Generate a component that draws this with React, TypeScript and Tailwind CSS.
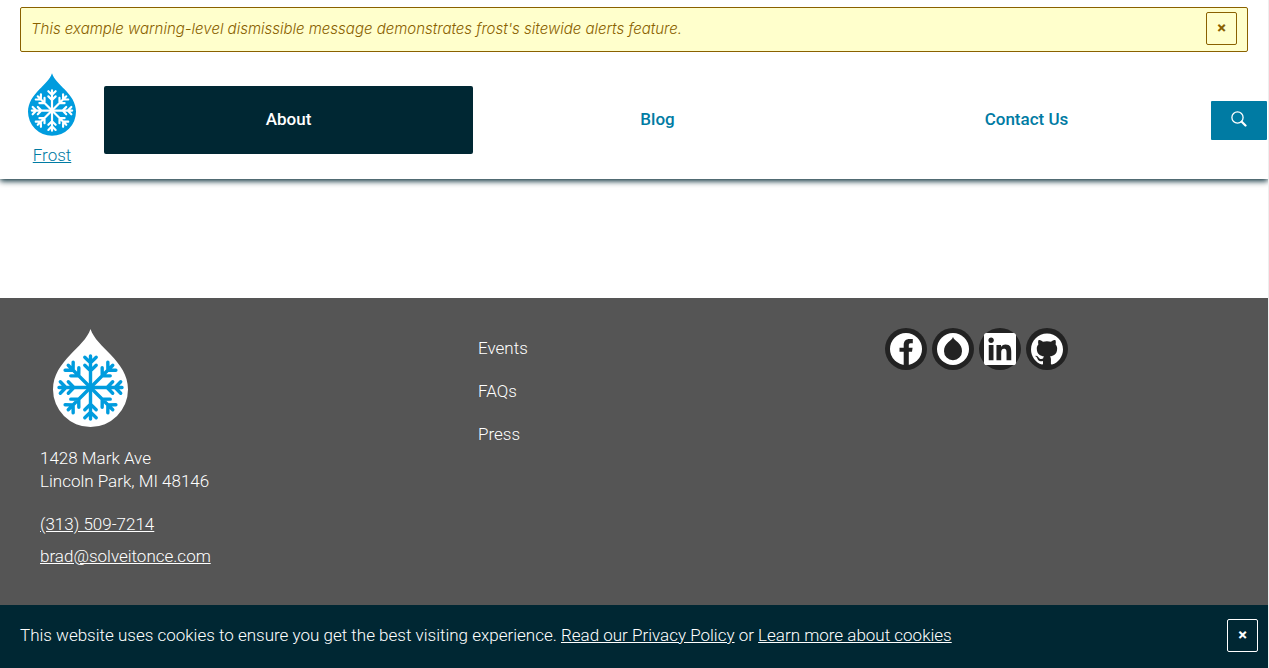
import type { ReactNode } from "react";
import { SiGithub } from "react-icons/si";

const navItems = [
  { label: "About", active: true },
  { label: "Blog", active: false },
  { label: "Contact Us", active: false },
];

const footerLinks = ["Events", "FAQs", "Press"];

const armAngles = [0, 45, 90, 135, 180, 225, 270, 315];

function DropLogo({ className, drop, flake }: { className: string; drop: string; flake: string }) {
  return (
    <svg viewBox="0 0 75 98" className={className} aria-hidden="true">
      <path
        fill={drop}
        d="M37.5 0C40.5 9.5 50 17.500 57.500 25.500C67 35.500 75 46 75 60.500A37.500 37.500 0 0 1 0 60.500C0 46 8 35.500 17.500 25.500C25 17.500 34.500 9.500 37.500 0Z"
      />
      <g fill="none" stroke={flake} strokeWidth="3.4" strokeLinecap="round" strokeLinejoin="round">
        {armAngles.map((angle) => (
          <path
            key={angle}
            transform={`translate(37.5 58.5) rotate(${angle})`}
            d="M0 0V-31.500M-5.700 -30.200L0 -24.600L5.700 -30.200M-5.700 -22.200L0 -16.600L5.700 -22.200"
          />
        ))}
      </g>
    </svg>
  );
}

function FacebookMark() {
  return (
    <svg viewBox="0 0 32 32" className="size-8" aria-hidden="true">
      <circle cx="16" cy="16" r="16" fill="#fff" />
      <path
        fill="#222"
        d="M13.700 32V18.800H9.500V14.700H13.700V12C13.700 8 16 6 19.500 6H22.800V10.200H20.600C19.100 10.200 18.800 10.900 18.800 12.200V14.700H22.600L22 18.800H18.800V32Z"
      />
    </svg>
  );
}

function DropBadge() {
  return (
    <svg viewBox="0 0 32 32" className="size-8" aria-hidden="true">
      <circle cx="16" cy="16" r="16" fill="#fff" />
      <path
        fill="#222"
        d="M16 4C16.600 6.200 18.800 7.600 20.800 9.300C23.500 11.700 25 14.700 25 18.200A9 9 0 0 1 7 18.200C7 14.700 8.500 11.700 11.200 9.300C13.200 7.600 15.400 6.200 16 4Z"
      />
    </svg>
  );
}

function LinkedInMark() {
  return (
    <svg viewBox="0 0 24 24" className="size-8" fill="currentColor" aria-hidden="true">
      <path d="M20.447 20.452h-3.554v-5.569c0-1.328-.027-3.037-1.852-3.037-1.853 0-2.136 1.445-2.136 2.939v5.667H9.351V9h3.414v1.561h.046c.477-.9 1.637-1.850 3.370-1.850 3.601 0 4.267 2.370 4.267 5.455v6.286zM5.337 7.433c-1.144 0-2.063-.926-2.063-2.065 0-1.138.92-2.063 2.063-2.063 1.140 0 2.064.925 2.064 2.063 0 1.139-.925 2.065-2.064 2.065zm1.782 13.019H3.555V9h3.564v11.452zM22.225 0H1.771C.792 0 0 .774 0 1.729v20.542C0 23.227.792 24 1.771 24h20.451C23.200 24 24 23.227 24 22.271V1.729C24 .774 23.200 0 22.222 0h.003z" />
    </svg>
  );
}

function CloseButton({ label, className }: { label: string; className: string }) {
  return (
    <button
      type="button"
      aria-label={label}
      className={`flex h-[33px] w-[31px] shrink-0 cursor-pointer items-center justify-center rounded-xs border pb-0.5 font-['Inter','Liberation_Sans',sans-serif] text-[15px] leading-4 font-bold ${className}`}
    >
      ×
    </button>
  );
}

function SocialLink({ label, children }: { label: string; children: ReactNode }) {
  return (
    <a
      href="#"
      aria-label={label}
      className="flex size-[42px] items-center justify-center rounded-full bg-[#222] text-white"
    >
      {children}
    </a>
  );
}

export default function App() {
  return (
    <div className="flex min-h-screen flex-col overflow-x-clip border-r border-[#eee] bg-white font-['Roboto','Liberation_Sans',sans-serif] text-[17px] leading-[23px] font-light">
      <header className="pt-[7px] shadow-[0_2px_6px_#002733]">
        <div
          role="alert"
          className="mx-5 flex h-[45px] items-start justify-between rounded-xs border border-[#8a6100] bg-[#ffffcc] px-2.5 pt-1 text-[#8a6100]"
        >
          <p className="pt-[5px] font-['Inter','Liberation_Sans',sans-serif] text-[15px] italic">
            This example warning-level dismissible message demonstrates frost's sitewide alerts feature.
          </p>
          <CloseButton label="Dismiss alert" className="border-[#8a6100]" />
        </div>

        <div className="flex items-center pr-px pt-[21px] pb-3">
          <a href="#" className="flex w-[104px] flex-col items-center gap-2 text-[#007ba3]">
            <DropLogo className="h-[63px] w-12" drop="#009cde" flake="#fff" />
            <span className="underline">Frost</span>
          </a>
          <nav className="grid flex-1 grid-cols-3">
            {navItems.map((item) => (
              <a
                key={item.label}
                href="#"
                className={`flex h-[68px] items-center justify-center rounded-xs pb-0.5 font-medium ${
                  item.active ? "bg-[#002733] text-white" : "text-[#007ba3]"
                }`}
              >
                {item.label}
              </a>
            ))}
          </nav>
          <button
            type="button"
            aria-label="Search"
            className="flex h-[39px] w-14 cursor-pointer items-center justify-center rounded-[1px] bg-[#007ba3] pb-0.5 text-white"
          >
            <svg viewBox="0 0 16 16" className="size-4" fill="none" stroke="currentColor" aria-hidden="true">
              <circle cx="6.500" cy="6.500" r="5.600" strokeWidth="1.300" />
              <path d="M10.700 10.700L14.500 14.500" strokeWidth="2.200" strokeLinecap="round" />
            </svg>
          </button>
        </div>
      </header>

      <main className="h-[119px]" />

      <footer className="grid flex-1 grid-cols-[438fr_407fr_383fr] bg-[#555] pt-[30px] pb-9 pl-10 text-white">
        <div>
          <DropLogo className="mt-px ml-[13px] h-[98px] w-[75px]" drop="#fff" flake="#009cde" />
          <address className="pt-5 not-italic">
            1428 Mark Ave
            <br />
            Lincoln Park, MI 48146
          </address>
          <div className="flex flex-col items-start gap-[9px] pt-5">
            <a href="tel:3135097214" className="underline">
              (313) 509-7214
            </a>
            <a href="mailto:brad@solveitonce.com" className="underline">
              brad@solveitonce.com
            </a>
          </div>
        </div>
        <ul className="flex flex-col gap-5 pt-[9px]">
          {footerLinks.map((label) => (
            <li key={label}>
              <a href="#">{label}</a>
            </li>
          ))}
        </ul>
        <div className="flex items-start gap-[5px]">
          <SocialLink label="Facebook">
            <FacebookMark />
          </SocialLink>
          <SocialLink label="Drupal">
            <DropBadge />
          </SocialLink>
          <SocialLink label="LinkedIn">
            <LinkedInMark />
          </SocialLink>
          <SocialLink label="GitHub">
            <SiGithub className="size-8" />
          </SocialLink>
        </div>
      </footer>

      <section
        aria-label="Cookie notice"
        className="flex h-[63px] items-center justify-between bg-[#002733] pr-2.5 pb-0.5 pl-5 text-white"
      >
        <p>
          This website uses cookies to ensure you get the best visiting experience.{" "}
          <a href="#" className="underline">
            Read our Privacy Policy
          </a>{" "}
          or{" "}
          <a href="#" className="underline">
            Learn more about cookies
          </a>
        </p>
        <CloseButton label="Dismiss cookie notice" className="border-white" />
      </section>
    </div>
  );
}
